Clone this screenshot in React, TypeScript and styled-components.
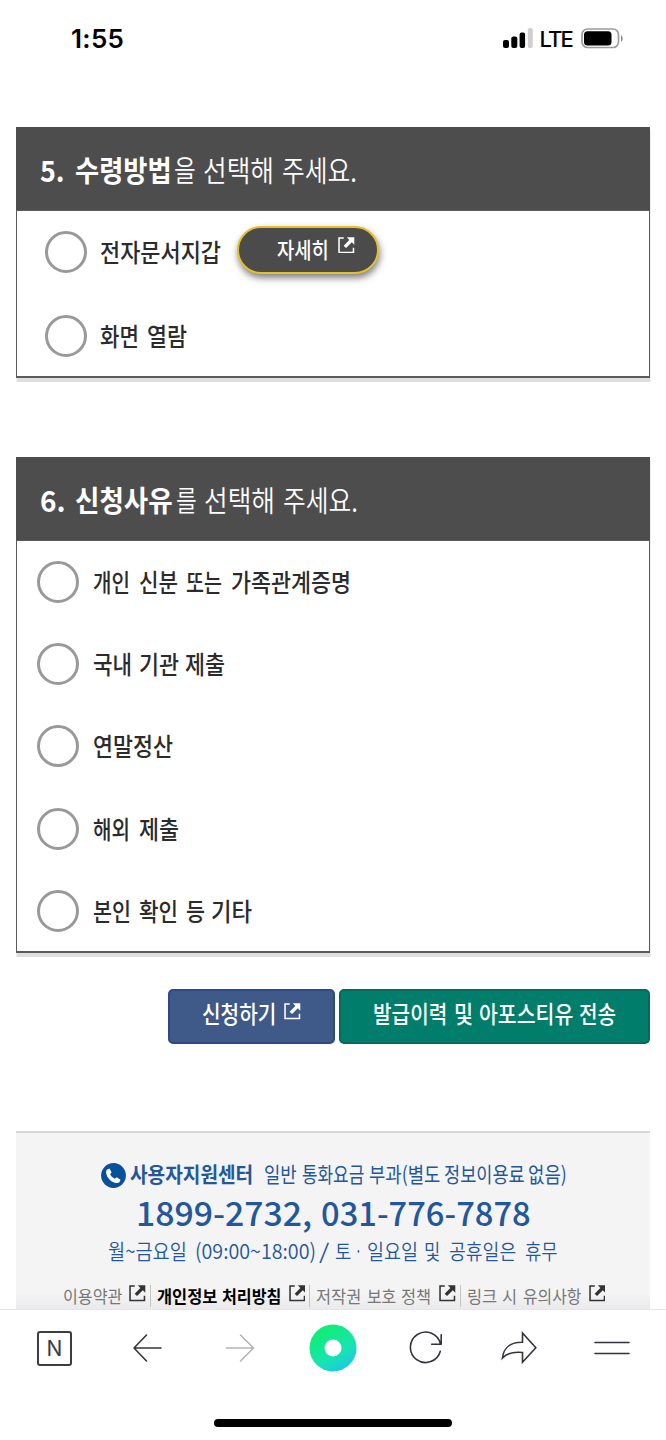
import React, { useLayoutEffect, useRef, useState } from "react";
import styled, { createGlobalStyle } from "styled-components";

const GlobalStyle = createGlobalStyle`
  * { box-sizing: border-box; }
  body {
    margin: 0;
    background: #fff;
    font-family: "Noto Sans CJK KR", sans-serif;
  }
`;

const Page = styled.div`
  width: 666px;
  height: 1440px;
  display: flex;
  flex-direction: column;
  overflow: hidden;
  background: #fff;
`;

/* ---------- text ---------- */

type Part = [text: string, from: number, to: number, bold?: boolean];

const Line = styled.span<{ $size: number; $color: string; $weight: number; $height: number }>`
  display: flex;
  flex: none;
  white-space: nowrap;
  font-size: ${(p) => p.$size}px;
  line-height: ${(p) => p.$height}px;
  height: ${(p) => p.$height}px;
  color: ${(p) => p.$color};
  font-weight: ${(p) => p.$weight};
`;

const WordBox = styled.span<{ $width: number; $gap: number; $bold?: boolean }>`
  flex: none;
  width: ${(p) => p.$width}px;
  margin-left: ${(p) => p.$gap}px;
  ${(p) => p.$bold && "font-weight: 700;"}
`;

const WordInk = styled.span`
  display: inline-block;
  transform-origin: 0 50%;
`;

/* Condenses a word so that it fills exactly the width it is given. */
function Word({ text, width, gap, bold }: { text: string; width: number; gap: number; bold?: boolean }) {
  const ref = useRef<HTMLSpanElement>(null);
  const [scale, setScale] = useState(1);
  useLayoutEffect(() => {
    if (ref.current) setScale(width / ref.current.offsetWidth);
  }, [width, text]);
  return (
    <WordBox $width={width} $gap={gap} $bold={bold}>
      <WordInk ref={ref} style={{ transform: `scaleX(${scale})` }}>{text}</WordInk>
    </WordBox>
  );
}

function Phrase({ parts, size, color = "#2b2b2b", weight = 500, height = 40 }: {
  parts: Part[]; size: number; color?: string; weight?: number; height?: number;
}) {
  return (
    <Line $size={size} $color={color} $weight={weight} $height={height}>
      {parts.map(([text, from, to, bold], i) => (
        <React.Fragment key={i}>
          <Word text={text} width={to - from + 1} gap={i ? from - parts[i - 1][2] - 1 : 0} bold={bold} />{" "}
        </React.Fragment>
      ))}
    </Line>
  );
}

/* ---------- status bar ---------- */

const StatusBar = styled.header`
  height: 127px;
  flex: none;
  display: flex;
  justify-content: space-between;
  padding: 24px 42px 0 71px;
  font-family: Inter, sans-serif;
  color: #000;
`;

const Clock = styled.span`
  font-size: 26px;
  line-height: 29px;
  font-weight: 600;
  letter-spacing: 0.3px;
`;

const StatusIcons = styled.span`
  display: flex;
  align-items: center;
  height: 28px;
`;

const Network = styled.span`
  font-size: 22px;
  line-height: 28px;
  font-weight: 500;
  letter-spacing: -1.8px;
  margin: 1px 9px 0 6px;
`;

/* ---------- sections ---------- */

const Card = styled.section<{ $gap: number }>`
  flex: none;
  margin: 0 16px ${(p) => p.$gap}px;
  box-shadow: 0.5px 4px 0 #dfdfdf;
`;

const CardHead = styled.h2`
  margin: 0;
  height: 83px;
  padding: 22px 0 0 24px;
  background: #4d4d4d;
`;

const CardBody = styled.div<{ $height: number; $indent: number }>`
  height: ${(p) => p.$height}px;
  padding-left: ${(p) => p.$indent}px;
  border: solid #5b5b5b;
  border-width: 1px 1.5px 2px;
  background: #fff;
`;

const Option = styled.label<{ $pitch: number; $gap: number }>`
  display: flex;
  align-items: flex-start;
  gap: ${(p) => p.$gap}px;
  height: ${(p) => p.$pitch}px;
  padding-top: 19.5px;
`;

const Radio = styled.span`
  flex: none;
  width: 42px;
  height: 42px;
  border: 3px solid #999;
  border-radius: 50%;
  background: #fff;
`;

const DetailButton = styled.span`
  flex: none;
  display: flex;
  width: 142px;
  height: 48px;
  margin: -5px 0 0 3px;
  padding: 0 0 0 38px;
  gap: 9px;
  border: 2px solid #e3c02c;
  border-radius: 24px;
  background: #4b4b4b;
  box-shadow: 1px 4px 7px rgba(0, 0, 0, 0.5);
`;

/* ---------- actions ---------- */

const Actions = styled.div`
  flex: none;
  display: flex;
  justify-content: flex-end;
  gap: 4px;
  height: 55px;
  margin: 0 16px 87px;
`;

const ActionButton = styled.span<{ $width: number; $bg: string; $edge: string; $pad: number }>`
  display: flex;
  gap: 8px;
  width: ${(p) => p.$width}px;
  padding: 2px 0 0 ${(p) => p.$pad}px;
  border: 2.5px solid ${(p) => p.$edge};
  border-radius: 5px;
  background: ${(p) => p.$bg};
`;

const IconSlot = styled.span<{ $top: number }>`
  flex: none;
  display: block;
  margin-top: ${(p) => p.$top}px;
  svg { display: block; }
`;

/* ---------- footer ---------- */

const Footer = styled.footer`
  flex: none;
  height: 178px;
  margin: 0 16px;
  border-top: 2px solid #d8d8d8;
  background: linear-gradient(#f4f4f4 160px, #eaeaec);
`;

const FooterRow = styled.div<{ $height: number; $left: number }>`
  display: flex;
  height: ${(p) => p.$height}px;
  padding-left: ${(p) => p.$left}px;
`;

const CenterRow = styled(FooterRow)`
  padding-top: 26px;
  gap: 4px;
`;

const Links = styled(FooterRow)`
  padding-top: 16px;
`;

const LinkItem = styled.a<{ $gap: number }>`
  display: flex;
  gap: ${(p) => p.$gap}px;
`;

const Divider = styled.i`
  width: 1px;
  height: 22px;
  margin: 3px 6px 0 4px;
  background: #c4c4c4;
`;

/* ---------- browser toolbar ---------- */

const Toolbar = styled.nav`
  flex: none;
  height: 131px;
  border-top: 1px solid #e6e6ea;
  background: #fff;
`;

const Tools = styled.div`
  display: flex;
  height: 76px;
  padding: 0 8px;
`;

const Tool = styled.span`
  flex: 1;
  display: flex;
  align-items: center;
  justify-content: center;
`;

const NBox = styled.span`
  width: 35px;
  height: 35px;
  border: 2px solid #3b3c44;
  border-radius: 3px;
  color: #3b3c44;
  font: 400 21px/31px Inter, sans-serif;
  text-align: center;
`;

const HomeBar = styled.div`
  width: 238px;
  height: 8px;
  margin: 33px auto 0;
  border-radius: 4px;
  background: #000;
`;

/* ---------- icons ---------- */

const OutIcon = ({ color, size = 16 }: { color: string; size?: number }) => (
  <svg width={size} height={size} viewBox="0 0 16 16" fill="none">
    <path d="M5.600 1H1v14h14v-4.600" stroke={color} strokeWidth="1.500" />
    <path d="M8.600.3h7.200v7.200l-2.400-2.400-5.600 5.600-2.300-2.300 5.500-5.600z" fill={color} />
  </svg>
);

const PhoneIcon = () => (
  <svg width="25" height="25" viewBox="0 0 25 25">
    <circle cx="12.500" cy="12.500" r="12.400" fill="#09509a" />
    <path d="M6.200 6.600l2.400-1.200 2 4-1.500 1.600c.8 2.200 2.400 3.700 4.800 4.700l1.800-1.500 3.800 2.500-.9 2.200c-1 1.200-2.700 1.400-4.600.8-4.300-1.300-7.800-4.800-8.700-9-.4-1.800-.1-3.100.9-4.100z" fill="#fff" />
  </svg>
);

const stroke = { fill: "none", stroke: "#33343b", strokeWidth: 1.6, strokeLinecap: "round", strokeLinejoin: "round" } as const;

const SECTION_ONE: Part[] = [["5.", 40, 64, true], ["수령방법", 75, 171, true], ["을", 174, 195], ["선택해", 203, 273], ["주세요.", 282, 356]];
const SECTION_TWO: Part[] = [["6.", 40, 65, true], ["신청사유", 75, 172, true], ["를", 176, 196], ["선택해", 204, 274], ["주세요.", 283, 357]];

const REASONS: Part[][] = [
  [["개인", 93, 129], ["신분", 139, 177], ["또는", 186, 221], ["가족관계증명", 231, 350]],
  [["국내", 93, 131], ["기관", 139, 178], ["제출", 185, 224]],
  [["연말정산", 93, 172]],
  [["해외", 93, 129], ["제출", 139, 178]],
  [["본인", 93, 130], ["확인", 139, 177], ["등", 186, 204], ["기타", 211, 251]],
];

const LINKS: { parts: Part[]; gap: number; strong?: boolean }[] = [
  { parts: [["이용약관", 63, 121]], gap: 7 },
  { parts: [["개인정보", 157, 216], ["처리방침", 222, 280]], gap: 8, strong: true },
  { parts: [["저작권", 317, 361], ["보호", 368, 396], ["정책", 402, 431]], gap: 8 },
  { parts: [["링크", 467, 496], ["시", 502, 516], ["유의사항", 523, 580]], gap: 8 },
];

export default function App() {
  return (
    <Page>
      <GlobalStyle />
      <StatusBar>
        <Clock>1:55</Clock>
        <StatusIcons>
          <svg width="30" height="20" viewBox="0 0 30 20">
            <rect x="0" y="12" width="6" height="8" rx="2" />
            <rect x="8.300" y="8.500" width="6" height="11.500" rx="2" />
            <rect x="16.600" y="4.500" width="5.500" height="15.500" rx="2" />
            <rect x="24.800" y="0" width="5" height="20" rx="2" fill="#cfcfcf" />
          </svg>
          <Network>LTE</Network>
          <svg width="43" height="21" viewBox="0 0 43 21">
            <rect x="1" y="1" width="36.500" height="18.500" rx="5.500" fill="none" stroke="#9c9c9c" strokeWidth="1.700" />
            <rect x="3" y="3.200" width="27.500" height="14.300" rx="3.500" />
            <path d="M40 7.300c2.200.9 2.200 5.500 0 6.400z" fill="#8a8a8a" />
          </svg>
        </StatusIcons>
      </StatusBar>

      <Card $gap={79}>
        <CardHead><Phrase parts={SECTION_ONE} size={29} color="#fff" weight={350} /></CardHead>
        <CardBody $height={168} $indent={28}>
          <Option $pitch={84} $gap={13}>
            <Radio />
            <Phrase parts={[["전자문서지갑", 100, 220]]} size={25} />
            <DetailButton>
              <Phrase parts={[["자세히", 277, 328]]} size={22} color="#fff" />
              <IconSlot $top={9}><OutIcon color="#fff" size={16.5} /></IconSlot>
            </DetailButton>
          </Option>
          <Option $pitch={83} $gap={13}>
            <Radio />
            <Phrase parts={[["화면", 100, 138], ["열람", 147, 186]]} size={25} />
          </Option>
        </CardBody>
      </Card>

      <Card $gap={36}>
        <CardHead><Phrase parts={SECTION_TWO} size={29} color="#fff" weight={350} /></CardHead>
        <CardBody $height={413} $indent={20}>
          {REASONS.map((parts, i) => (
            <Option key={i} $pitch={82.4} $gap={14}>
              <Radio />
              <Phrase parts={parts} size={25} />
            </Option>
          ))}
        </CardBody>
      </Card>

      <Actions>
        <ActionButton $width={167} $bg="#3f5988" $edge="#2c4a84" $pad={32}>
          <Phrase parts={[["신청하기", 202, 275]]} size={24} color="#fff" />
          <IconSlot $top={10}><OutIcon color="#fff" size={16.5} /></IconSlot>
        </ActionButton>
        <ActionButton $width={311} $bg="#007d6b" $edge="#046b5a" $pad={32}>
          <Phrase parts={[["발급이력", 373, 446], ["및", 454, 472], ["아포스티유", 479, 572], ["전송", 579, 615]]} size={24} color="#fff" />
        </ActionButton>
      </Actions>

      <Footer>
        <CenterRow $height={57} $left={85}>
          <IconSlot $top={4}><PhoneIcon /></IconSlot>
          <Phrase
            parts={[["사용자지원센터", 130, 252, true], ["일반", 264, 296], ["통화요금", 302, 363], ["부과(별도", 369, 439], ["정보이용료", 444, 524], ["없음)", 528, 566]]}
            size={21} color="#24569b" weight={400} height={29}
          />
        </CenterRow>
        <FooterRow $height={44} $left={120}>
          <Phrase parts={[["1899-2732,", 136, 311], ["031-776-7878", 321, 530]]} size={33} color="#24569b" weight={500} height={45} />
        </FooterRow>
        <FooterRow $height={32} $left={92}>
          <Phrase
            parts={[["월~금요일", 108, 186], ["(09:00~18:00)", 195, 315], ["/", 319, 328], ["토", 335, 350], ["·", 355, 361], ["일요일", 367, 417], ["및", 424, 439], ["공휴일은", 449, 515], ["휴무", 525, 557]]}
            size={21} color="#24569b" weight={350} height={33}
          />
        </FooterRow>
        <Links $height={43} $left={47}>
          {LINKS.map(({ parts, gap, strong }, i) => (
            <React.Fragment key={i}>
              {i > 0 && <Divider />}
              <LinkItem $gap={gap}>
                <Phrase parts={parts} size={17.5} color={strong ? "#000" : "#777"} weight={strong ? 700 : 400} height={27} />
                <IconSlot $top={3}><OutIcon color="#333" size={16.5} /></IconSlot>
              </LinkItem>
            </React.Fragment>
          ))}
        </Links>
      </Footer>

      <Toolbar>
        <Tools>
          <Tool><NBox>N</NBox></Tool>
          <Tool>
            <svg width="30" height="30" viewBox="0 0 30 30" {...stroke}><path d="M14.500 2L2 15l12.500 13M2 15h27" /></svg>
          </Tool>
          <Tool>
            <svg width="30" height="30" viewBox="0 0 30 30" {...stroke} stroke="#b3b3b3"><path d="M15.500 2L28.500 15l-13 13M28.500 15H1.500" /></svg>
          </Tool>
          <Tool>
            <svg width="48" height="48" viewBox="0 0 48 48">
              <defs>
                <linearGradient id="green" x1=".25" y1="0" x2=".85" y2="1">
                  <stop offset="0" stopColor="#0fef6c" />
                  <stop offset=".6" stopColor="#17e4b0" />
                  <stop offset="1" stopColor="#1fc3ee" />
                </linearGradient>
              </defs>
              <circle cx="24" cy="24" r="23.500" fill="url(#green)" />
              <circle cx="24" cy="24" r="8.500" fill="#fff" />
            </svg>
          </Tool>
          <Tool>
            <svg width="34" height="34" viewBox="0 0 34 34" {...stroke}>
              <path d="M31.300 20.200A15.200 15.200 0 1 1 31.500 13.200M32.200 3.800v9.500h-9.500" />
            </svg>
          </Tool>
          <Tool>
            <svg width="36" height="34" viewBox="0 0 36 34" {...stroke}>
              <path d="M21.500 2L34.800 16.700 21.500 31.200V21.500C13 20.800 5.500 22 1.500 27 2.500 17 9.500 11 21.500 11.200z" strokeLinejoin="miter" />
            </svg>
          </Tool>
          <Tool>
            <svg width="36" height="20" viewBox="0 0 36 20" {...stroke}><path d="M1 4.500h34M1 15.500h34" /></svg>
          </Tool>
        </Tools>
        <HomeBar />
      </Toolbar>
    </Page>
  );
}
